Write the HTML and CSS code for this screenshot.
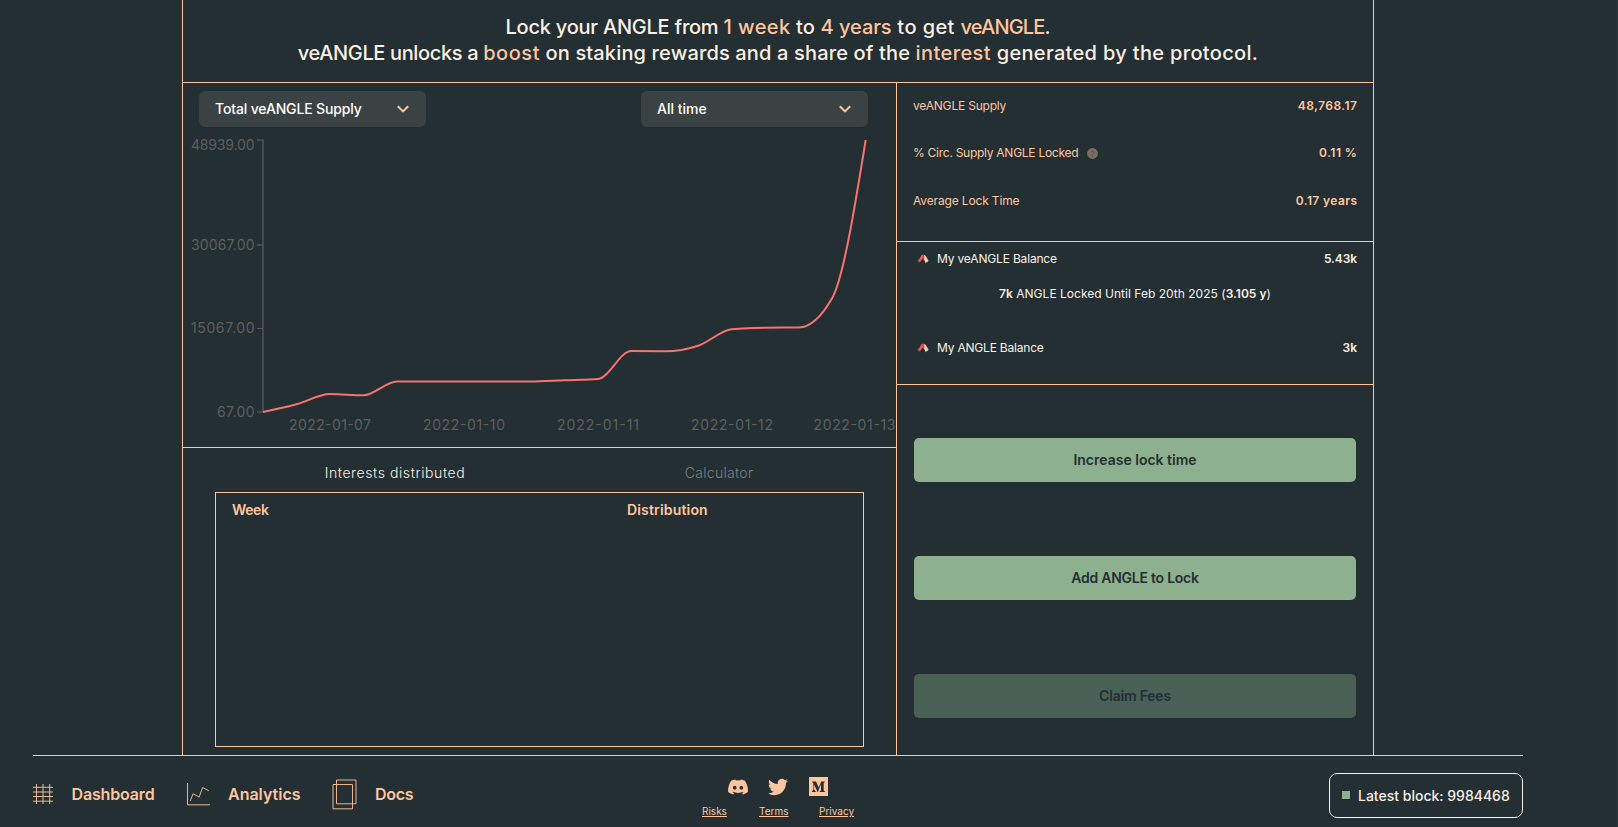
FILE: index.html
```html
<!DOCTYPE html>
<html lang="en">
<head>
<meta charset="utf-8">
<title>veANGLE</title>
<link rel="stylesheet" href="styles.css">
</head>
<body>
<main class="panel">
  <header class="intro">
    <p class="intro-a"><span class="snug">Lock your ANGLE from </span><em class="wide">1 week</em><span class="open"> to </span><em>4 years</em><span class="wide"> to get </span><em class="tight">veANGLE</em>.</p>
    <p class="intro-b"><span class="close">veANGLE unlocks a </span><em class="wider">boost</em> on staking rewards and a share of the <em class="wide">interest</em><span class="airy"> generated by the protocol.</span></p>
  </header>
  <div class="columns">
    <section class="left">
      <div class="history">
        <div class="selects">
          <button class="select"><span class="sel-a">Total veANGLE Supply</span><svg class="chev" viewBox="0 0 12 8"><path d="M.8 1.2 6 6.4 11.200 1.200" fill="none" stroke="#ffc59f" stroke-width="2"/></svg></button>
          <button class="select"><span class="sel-b">All time</span><svg class="chev" viewBox="0 0 12 8"><path d="M.8 1.2 6 6.4 11.200 1.200" fill="none" stroke="#ffc59f" stroke-width="2"/></svg></button>
        </div>
        <svg class="chart" viewBox="183 127 713 320">
          <path class="axis" d="M257 140H263V412H257"/>
          <path class="axis" d="M257 245H263"/>
          <path class="axis thin" d="M257 328.5H263"/>
          <g class="labels">
            <text x="191" y="150" textLength="63.5">48939.00</text>
            <text x="191" y="250" textLength="63.5">30067.00</text>
            <text x="191" y="333.3" textLength="63.5">15067.00</text>
            <text x="217" y="417" textLength="37.5">67.00</text>
            <text x="289" y="430.3" textLength="82">2022-01-07</text>
            <text x="423" y="430.3" textLength="82">2022-01-10</text>
            <text x="557" y="430.3" textLength="82">2022-01-11</text>
            <text x="691" y="430.3" textLength="82">2022-01-12</text>
            <text x="813.500" y="430.3" textLength="82">2022-01-13</text>
          </g>
          <path class="line" d="M263 412C274.2 409.65 285.3 407.3 296.5 404.3C307.6 401.3 318.8 394 330 394C341.1 394 352.3 395.3 363.4 395.3C374.6 395.3 385.8 381.5 396.9 381.5H530.9C542 381.5 553.2 380.6 564.3 380.2C575.5 379.8 586.6 379.8 597.8 379C609 378.2 620.1 351 631.3 351C642.4 351 653.6 351.3 664.8 351.3C675.9 351.3 687 349.4 698.2 345.7C709.4 342 720.5 330.4 731.7 329.3C742.9 328.2 754 327.8 765.2 327.7C776.4 327.6 787.5 327.6 798.7 327.5C809.8 327.4 821 317.7 832.2 298C843.3 278.3 854.5 209.2 865.7 140"/>
        </svg>
      </div>
      <nav class="tabs"><a class="tab-a">Interests distributed</a><a class="tab-b">Calculator</a></nav>
      <div class="table"><span class="week">Week</span><span class="dist">Distribution</span></div>
    </section>
    <aside class="right">
      <div class="stats">
        <div class="row"><span class="s1">veANGLE Supply</span><b class="v1">48,768.17</b></div>
        <div class="row circ"><span class="s2">% Circ. Supply ANGLE Locked</span><svg class="help" viewBox="0 0 11 11"><circle cx="5.5" cy="5.5" r="5.4" fill="#7d6b61"/><path d="M4.1 4.6C4.1 2.9 6.9 2.9 6.9 4.6 6.9 5.5 5.5 5.6 5.5 6.5M5.5 7.4V8.3" fill="none" stroke="#4a4e4f" stroke-width=".9"/></svg><b class="v2">0.11 %</b></div>
        <div class="row"><span class="s3">Average Lock Time</span><b class="v3">0.17 years</b></div>
      </div>
      <div class="balances">
        <div class="row first"><svg class="angle" viewBox="0 0 12 10"><path d="M0 6.500 2.600 4 2.200 9 1.400 8Z" fill="#66515a"/><path d="M1.600 6.800 4.200 1.600 6.300.6 6.300 3.800 2.800 8.600Z" fill="#f0596a"/><path d="M5.400 3.200 6.300.6 8 1.200 7.400 6.400 5.800 5Z" fill="#d5424f"/><path d="M7.200 1 8.600 1.800 11.600 6.800 9.800 8.600 7.200 6Z" fill="#fbc79f"/><path d="M7.400 5.400 9.800 6 8.800 9.400Z" fill="#fff0d8"/></svg><span class="b1">My veANGLE Balance</span><b class="v4">5.43k</b></div>
        <p class="locked"><b>7k</b> ANGLE Locked Until Feb 20th 2025 (<b>3.105 y</b>)</p>
        <div class="row"><svg class="angle" viewBox="0 0 12 10"><path d="M0 6.500 2.600 4 2.200 9 1.400 8Z" fill="#66515a"/><path d="M1.600 6.800 4.200 1.600 6.300.6 6.300 3.800 2.800 8.600Z" fill="#f0596a"/><path d="M5.400 3.200 6.300.6 8 1.200 7.400 6.400 5.800 5Z" fill="#d5424f"/><path d="M7.200 1 8.600 1.800 11.600 6.800 9.800 8.600 7.200 6Z" fill="#fbc79f"/><path d="M7.400 5.400 9.800 6 8.800 9.400Z" fill="#fff0d8"/></svg><span class="b2">My ANGLE Balance</span><b class="v5">3k</b></div>
      </div>
      <div class="actions">
        <button class="btn"><span class="a1">Increase lock time</span></button>
        <button class="btn"><span class="a2">Add ANGLE to Lock</span></button>
        <button class="btn off"><span class="a3">Claim Fees</span></button>
      </div>
    </aside>
  </div>
</main>
<footer class="footer">
  <nav class="nav">
    <a class="n1"><svg width="20" height="20" viewBox="0 0 20 20"><path d="M3.5 0V20M10 0V20M16.7 0V20M0 3.3H20M0 8H20M0 12.5H20M0 17.2H20" class="ico"/></svg><span class="t1">Dashboard</span></a>
    <a class="n2"><svg width="23" height="23" viewBox="0 0 23 23"><path d="M.5 0V21.8H23M3.2 18 6 10.8 12.2 14 15.6 4.5 21.7 7.7" class="ico"/></svg><span class="t2">Analytics</span></a>
    <a class="n3"><svg width="25" height="31" viewBox="0 0 25 31"><path d="M1 5.5H20.5V29.8H1ZM4.5 1H24V24.8H4.5Z" class="ico"/></svg><span class="t3">Docs</span></a>
  </nav>
  <div class="center">
    <div class="social">
      <svg width="20" height="16" viewBox="0 0 24 19"><path fill="#ffc59f" fill-rule="evenodd" d="M20.3 2C18.8 1.2 17.2.7 15.4.4L14.8 1.7Q12 1.3 9.3 1.7L8.7.4C7 .7 5.300 1.200 3.800 2 .7 6.500-.1 11 .2 15.600 2.200 17 4.200 18 6.200 18.600L7.400 16.600Q6.400 16.200 5.500 15.700L6 15.300C10 17.100 14.200 17.100 18.100 15.300L18.600 15.700Q17.700 16.200 16.700 16.600L17.900 18.600C19.900 18 21.900 17 23.900 15.600 24.300 10.300 22.900 5.900 20.300 2ZM8.100 12.700C6.900 12.700 5.900 11.600 5.900 10.300S6.900 7.900 8.100 7.900 10.300 9 10.300 10.300 9.300 12.700 8.100 12.700ZM16 12.700C14.800 12.700 13.800 11.600 13.800 10.300S14.800 7.900 16 7.900 18.200 9 18.200 10.300 17.200 12.700 16 12.700Z"/></svg>
      <svg width="20" height="18" viewBox="0 2 24 20"><path fill="#ffc59f" d="M23.953 4.570a10 10 0 01-2.825.775 4.958 4.958 0 002.163-2.723c-.951.555-2.005.959-3.127 1.184a4.920 4.920 0 00-8.384 4.482C7.690 8.095 4.067 6.130 1.640 3.162a4.822 4.822 0 00-.666 2.475c0 1.710.870 3.213 2.188 4.096a4.904 4.904 0 01-2.228-.616v.060a4.923 4.923 0 003.946 4.827 4.996 4.996 0 01-2.212.085 4.936 4.936 0 004.604 3.417 9.867 9.867 0 01-6.102 2.105c-.390 0-.779-.023-1.170-.067a13.995 13.995 0 007.557 2.209c9.053 0 13.998-7.496 13.998-13.985 0-.210 0-.420-.015-.630A9.935 9.935 0 0024 4.590z"/></svg>
      <svg class="medium" width="19" height="19" viewBox="0 0 19 19"><path fill="#ffc59f" fill-rule="evenodd" d="M0 0H19V19H0ZM3.200 4.400H7L9.700 10.400 12.200 4.400H15.900V4.900L14.700 5.900V13.400L15.900 14.400V14.900H10.700V14.400L12 13.200V7.200L8.900 14.900H8.500L5.100 7.400V12.500L6.700 14.400V14.900H3V14.400L4.400 12.500V6.500L3.200 4.900Z"/></svg>
    </div>
    <div class="links"><a class="l1">Risks</a><a class="l2">Terms</a><a class="l3">Privacy</a></div>
  </div>
  <div class="block"><i class="dot"></i><span class="bt">Latest block: 9984468</span></div>
</footer>
</body>
</html>
```
FILE: styles.css
```css
* { box-sizing: border-box; }
html { background: #232f33; }
body {
  margin: 0;
  height: 827px;
  overflow: hidden;
  background: #232f33;
  border-right: 1px solid #2c393e;
  color: #faf0e6;
  font-family: Inter, "Liberation Sans", sans-serif;
  font-size: 12px;
}
p { margin: 0; }
a, b { white-space: nowrap; }
b { font-weight: 600; }
button { border: 0; font: inherit; }

.panel {
  width: 1192px;
  height: 755px;
  margin-left: 182px;
  border: 1px solid #ffc59f;
  border-width: 0 1px;
  display: flex;
  flex-direction: column;
}
.intro {
  height: 83px;
  padding-top: 14px;
  border-bottom: 1px solid #ffc59f;
  text-align: center;
  font-size: 20px;
  line-height: 26px;
  font-weight: 500;
  white-space: nowrap;
}
.intro em { font-style: normal; color: #ffc59f; }
.intro-a { letter-spacing: -.055px; }
.intro-b { letter-spacing: .152px; }
.snug { letter-spacing: -.23px; }
.close { letter-spacing: -.36px; }
.tight { letter-spacing: -.85px; }
.open { letter-spacing: .15px; }
.airy { letter-spacing: .33px; }
.wide { letter-spacing: .42px; }
.wider { letter-spacing: .55px; }
.columns { flex: 1; display: grid; grid-template-columns: 713px 1fr; }

.left { display: flex; flex-direction: column; }
.history { height: 365px; border-bottom: 1px solid #ffc59f; }
.selects { height: 44px; padding: 8px 28px 0 16px; display: flex; justify-content: space-between; }
.select {
  width: 227px;
  height: 36px;
  padding: 0 17px 1px 16px;
  display: flex;
  align-items: center;
  justify-content: space-between;
  border-radius: 6px;
  background: #3a4244;
  color: #fff;
  font-size: 14px;
  font-weight: 500;
}
.sel-a { letter-spacing: -.15px; }
.chev { width: 12px; height: 8px; }
.chart { display: block; width: 713px; height: 320px; }
.axis { fill: none; stroke: #444b4d; stroke-width: 2; }
.thin { stroke-width: 1; stroke: #565a5c; }
.labels { fill: #5c5f60; font-size: 14px; font-weight: 400; }
.line { fill: none; stroke: #f8726f; stroke-width: 2; }

.tabs { width: 648px; height: 44px; margin-left: 50px; padding-top: 5px; display: grid; grid-template-columns: 1fr 1fr; align-items: center; justify-items: center; font-size: 14px; font-weight: 300; }
.tab-a { letter-spacing: .59px; }
.tab-b { color: #7b8080; letter-spacing: .3px; }
.table {
  width: 649px;
  height: 255px;
  margin-left: 32px;
  border: 1px solid #ffc59f;
  padding: 8px 16px;
  display: grid;
  grid-template-columns: 395px 1fr;
  align-items: start;
  font-size: 14px;
  line-height: 18px;
  font-weight: 600;
  color: #ffc59f;
}
.week { letter-spacing: -.4px; }
.dist { letter-spacing: .17px; }

.right { border-left: 1px solid #ffc59f; display: flex; flex-direction: column; }
.row { display: flex; align-items: center; }
.row b { margin-left: auto; }
.stats { height: 159px; padding: 0 16px; border-bottom: 1px solid #ffc59f; color: #ffc59f; }
.stats .row { height: 47.5px; padding-bottom: 2px; }
.stats .circ { padding-bottom: 4px; }
.stats b { margin-right: -.4px; }
.s1 { letter-spacing: -.2px; }
.s2 { letter-spacing: -.27px; }
.s3 { letter-spacing: -.15px; }
.v1, .v2 { letter-spacing: .45px; }
.v3 { letter-spacing: .4px; }
.help { width: 11px; height: 11px; margin: 2px 0 0 9px; }
.balances { height: 143px; padding: 0 16px; border-bottom: 1px solid #ffc59f; }
.balances .row { height: 35px; padding-bottom: 1px; }
.balances .first { padding-bottom: 3px; }
.b1 { letter-spacing: -.17px; }
.b2 { letter-spacing: -.2px; }
.v4 { letter-spacing: -.1px; }
.locked { height: 18px; line-height: 18px; margin: 8px 0 27px; text-align: center; letter-spacing: .02px; }
.angle { width: 12px; height: 10px; margin: 2px 8px 0 4px; }
.actions { flex: 1; padding: 16px 17px 0; display: flex; flex-direction: column; justify-content: space-around; }
.btn {
  height: 43.6px;
  padding: 0 0 2px;
  border-radius: 5px;
  background: #8db18f;
  color: #232f34;
  font-size: 14px;
  font-weight: 600;
}
.off { background: #4a5f55; }
.a2 { letter-spacing: -.24px; }
.a3 { letter-spacing: -.2px; }

.footer {
  width: 1490px;
  height: 72px;
  margin-left: 33px;
  border-top: 1px solid #ffc59f;
  display: grid;
  grid-template-columns: 669px 1fr auto;
  color: #ffc59f;
}
.nav { display: flex; padding-top: 5px; font-size: 16px; font-weight: 600; }
.nav a { display: flex; align-items: center; }
.n1 { width: 154px; gap: 18.5px; }
.n2 { width: 145px; gap: 18px; }
.n3 { gap: 18px; }
.t1 { letter-spacing: -.15px; }
.t3 { letter-spacing: -.3px; }
.ico { fill: none; stroke: #ffc59f; stroke-width: .9; }
.center { padding-top: 21px; }
.social { display: flex; gap: 20px; height: 19px; align-items: center; padding-left: 26px; }
.medium { margin-left: 1px; }
.links { margin-top: 9px; display: flex; font-size: 10px; line-height: 12px; }
.links a { text-decoration: underline; }
.l1 { width: 57px; }
.l2 { width: 60px; }
.block {
  width: 194px;
  height: 45px;
  margin-top: 17px;
  padding: 0 12px 1px;
  border: 1px solid #faf0e6;
  border-radius: 8px;
  display: flex;
  align-items: center;
  gap: 8px;
  color: #faf0e6;
  font-size: 14px;
  font-weight: 500;
  white-space: nowrap;
}
.dot { width: 8px; height: 8px; background: #8db18f; }
```
